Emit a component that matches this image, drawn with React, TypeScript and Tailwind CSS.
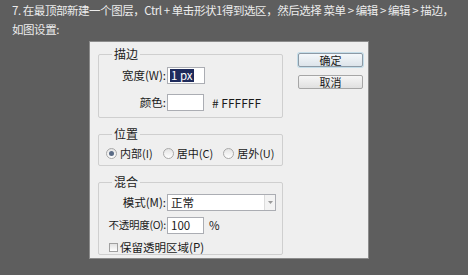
import React from "react";

const font = { fontFamily: '"Noto Sans CJK SC", "Liberation Sans", sans-serif' };

function Radio({ checked, label, className }: { checked?: boolean; label: string; className?: string }) {
  return (
    <div className={"flex items-center gap-[3px] whitespace-nowrap text-[11px] " + (className ?? "")}>
      <span className="w-[11px] h-[11px] shrink-0 rounded-full border border-[#a9a9a9] bg-gradient-to-b from-[#e4e4e4] to-[#ffffff] flex items-center justify-center">
        {checked && <span className="w-[5px] h-[5px] rounded-full bg-[#5a6b86]" />}
      </span>
      <span>{label}</span>
    </div>
  );
}

function Group({ title, className, children }: { title: string; className?: string; children: React.ReactNode }) {
  return (
    <div className={"relative w-[185px] border border-[#cfcfcf] rounded-[2px] " + (className ?? "")}>
      <span className="absolute left-[13px] top-[-8px] px-[2px] bg-[#efefef] text-[#222] text-[12px] leading-[14px]">{title}</span>
      {children}
    </div>
  );
}

export default function App() {
  return (
    <div className="w-[468px] h-[275px] bg-[#5e5e5e] relative overflow-hidden text-[12px] leading-none" style={font}>
      <div className="pl-[12px] pt-[1px] text-[#ececec] text-[11.5px] leading-[19px] tracking-[-0.45px]">
        <div className="whitespace-nowrap">7. 在最顶部新建一个图层，Ctrl + 单击形状1得到选区，然后选择 菜单 &gt; 编辑 &gt; 编辑 &gt; 描边，</div>
        <div>如图设置:</div>
      </div>
      <div className="absolute left-[89px] top-[41px] w-[280px] h-[218px] bg-[#efefef] border border-[#8c8c8c] text-[#1a1a1a] text-[11.5px]">
        <div className="flex pl-[8px] pt-[12px] gap-[15px]">
          <div className="flex flex-col gap-[16px]">
            <Group title="描边" className="h-[64px]">
              <div className="flex flex-col gap-[10px] pt-[12px]">
                <div className="flex items-center whitespace-nowrap">
                  <span className="w-[68px] text-right pr-[1px]">宽度(W):</span>
                  <div className="w-[38px] h-[17px] bg-white border border-[#abadb3] flex items-center px-[2px]">
                    <span className="bg-[#1e2b5c] text-white px-[1px] leading-[13px]">1 px</span>
                  </div>
                </div>
                <div className="flex items-center whitespace-nowrap">
                  <span className="w-[68px] text-right pr-[1px]">颜色:</span>
                  <div className="w-[37px] h-[17px] bg-white border border-[#abadb3]" />
                  <span className="ml-[8px] text-[12px]">#&nbsp;FFFFFF</span>
                </div>
              </div>
            </Group>
            <Group title="位置" className="h-[32px]">
              <div className="flex items-center pt-[13px] pl-[7px]">
                <Radio checked label="内部(I)" />
                <Radio label="居中(C)" className="ml-[10px]" />
                <Radio label="居外(U)" className="ml-[10px]" />
              </div>
            </Group>
            <Group title="混合" className="h-[73px]">
              <div className="flex flex-col pt-[11px]">
                <div className="flex items-center whitespace-nowrap">
                  <span className="w-[68px] text-right pr-[1px]">模式(M):</span>
                  <div className="w-[109px] h-[17px] bg-white border border-[#abadb3] flex items-center justify-between pl-[3px]">
                    <span>正常</span>
                    <span className="w-[11px] h-[15px] border-l border-[#dcdcdc] bg-[#f3f3f3] flex items-center justify-center">
                      <svg width="5" height="3" viewBox="0 0 5 3"><path d="M0 0h5L2.5 3z" fill="#9a9a9a" /></svg>
                    </span>
                  </div>
                </div>
                <div className="flex items-center whitespace-nowrap mt-[6px]">
                  <span className="w-[68px] text-right pr-[1px] text-[10.5px] tracking-[-0.3px]">不透明度(O):</span>
                  <div className="w-[37px] h-[17px] bg-white border border-[#abadb3] flex items-center pl-[3px]">100</div>
                  <span className="ml-[5px]">%</span>
                </div>
                <div className="flex items-center gap-[2px] whitespace-nowrap mt-[8px] pl-[10px]">
                  <span className="w-[9px] h-[9px] border border-[#a0a0a0] bg-gradient-to-b from-[#e2e2e2] to-white" />
                  <span>保留透明区域(P)</span>
                </div>
              </div>
            </Group>
          </div>
          <div className="flex flex-col gap-[8px] -mt-[1px]">
            <button className="w-[65px] h-[14px] border border-[#8c9aa6] rounded-[2px] bg-gradient-to-b from-[#f4f8fb] to-[#dde4ea] text-[11px] leading-none flex items-center justify-center shadow-[0_0_0_1px_#c4dde9]">确定</button>
            <button className="w-[65px] h-[14px] border border-[#a6a6a6] rounded-[2px] bg-gradient-to-b from-[#f6f6f6] to-[#e0e0e0] text-[11px] leading-none flex items-center justify-center">取消</button>
          </div>
        </div>
      </div>
    </div>
  );
}
